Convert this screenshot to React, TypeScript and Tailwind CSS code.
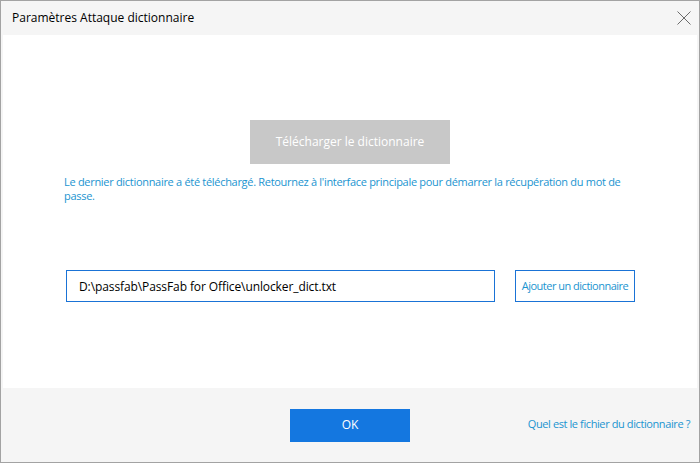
import * as React from "react"

const FONT = { fontFamily: '"Open Sans", "Liberation Sans", sans-serif' }

export default function DictionarySettings() {
  const [path, setPath] = React.useState("D:\\passfab\\PassFab for Office\\unlocker_dict.txt")

  return (
    <div
      className="flex h-[463px] w-[700px] flex-col border border-[#a3a3a3] bg-[#f5f5f5]"
      style={FONT}
    >
      {/* title bar */}
      <div className="flex h-[34px] items-center justify-between pl-[11px] pr-[7px]">
        <span className="text-[12px] text-black">Paramètres Attaque dictionnaire</span>
        <svg width="16" height="16" viewBox="0 0 16 16" className="text-[#6b6b6b]">
          <path d="M1.5 1.5 L14.5 14.5 M14.5 1.5 L1.5 14.5" stroke="currentColor" strokeWidth="1" />
        </svg>
      </div>

      {/* body */}
      <div className="mx-[2px] flex h-[353px] flex-col bg-white">
        <div className="mt-[85px] flex justify-center">
          <button className="h-[44px] w-[200px] bg-[#c8c8c8] text-[12px] text-white">
            Télécharger le dictionnaire
          </button>
        </div>
        <p className="mt-[11px] ml-[61px] w-[562px] text-[11px] leading-[14px] tracking-[-0.3px] text-[#1a94d0]">
          Le dernier dictionnaire a été téléchargé. Retournez à l'interface principale pour démarrer la récupération du mot de passe.
        </p>
        <div className="mt-[67px] ml-[63px] flex items-center gap-[20px]">
          <input
            value={path}
            onChange={(e) => setPath(e.target.value)}
            className="h-[32px] w-[429px] border border-[#1a73d6] px-[12px] text-[12px] tracking-[-0.1px] text-black outline-none"
          />
          <button className="h-[32px] w-[120px] whitespace-nowrap border border-[#1a73d6] text-[11px] tracking-[-0.5px] text-[#1a94d0]">
            Ajouter un dictionnaire
          </button>
        </div>
      </div>

      {/* footer */}
      <div className="relative flex flex-1 items-center justify-center">
        <button className="h-[33px] w-[120px] bg-[#1477e0] text-[12px] text-white">OK</button>
        <a className="absolute right-[9px] top-[28px] whitespace-nowrap text-[11px] tracking-[-0.4px] text-[#1a94d0]">
          Quel est le fichier du dictionnaire ?
        </a>
      </div>
    </div>
  )
}
